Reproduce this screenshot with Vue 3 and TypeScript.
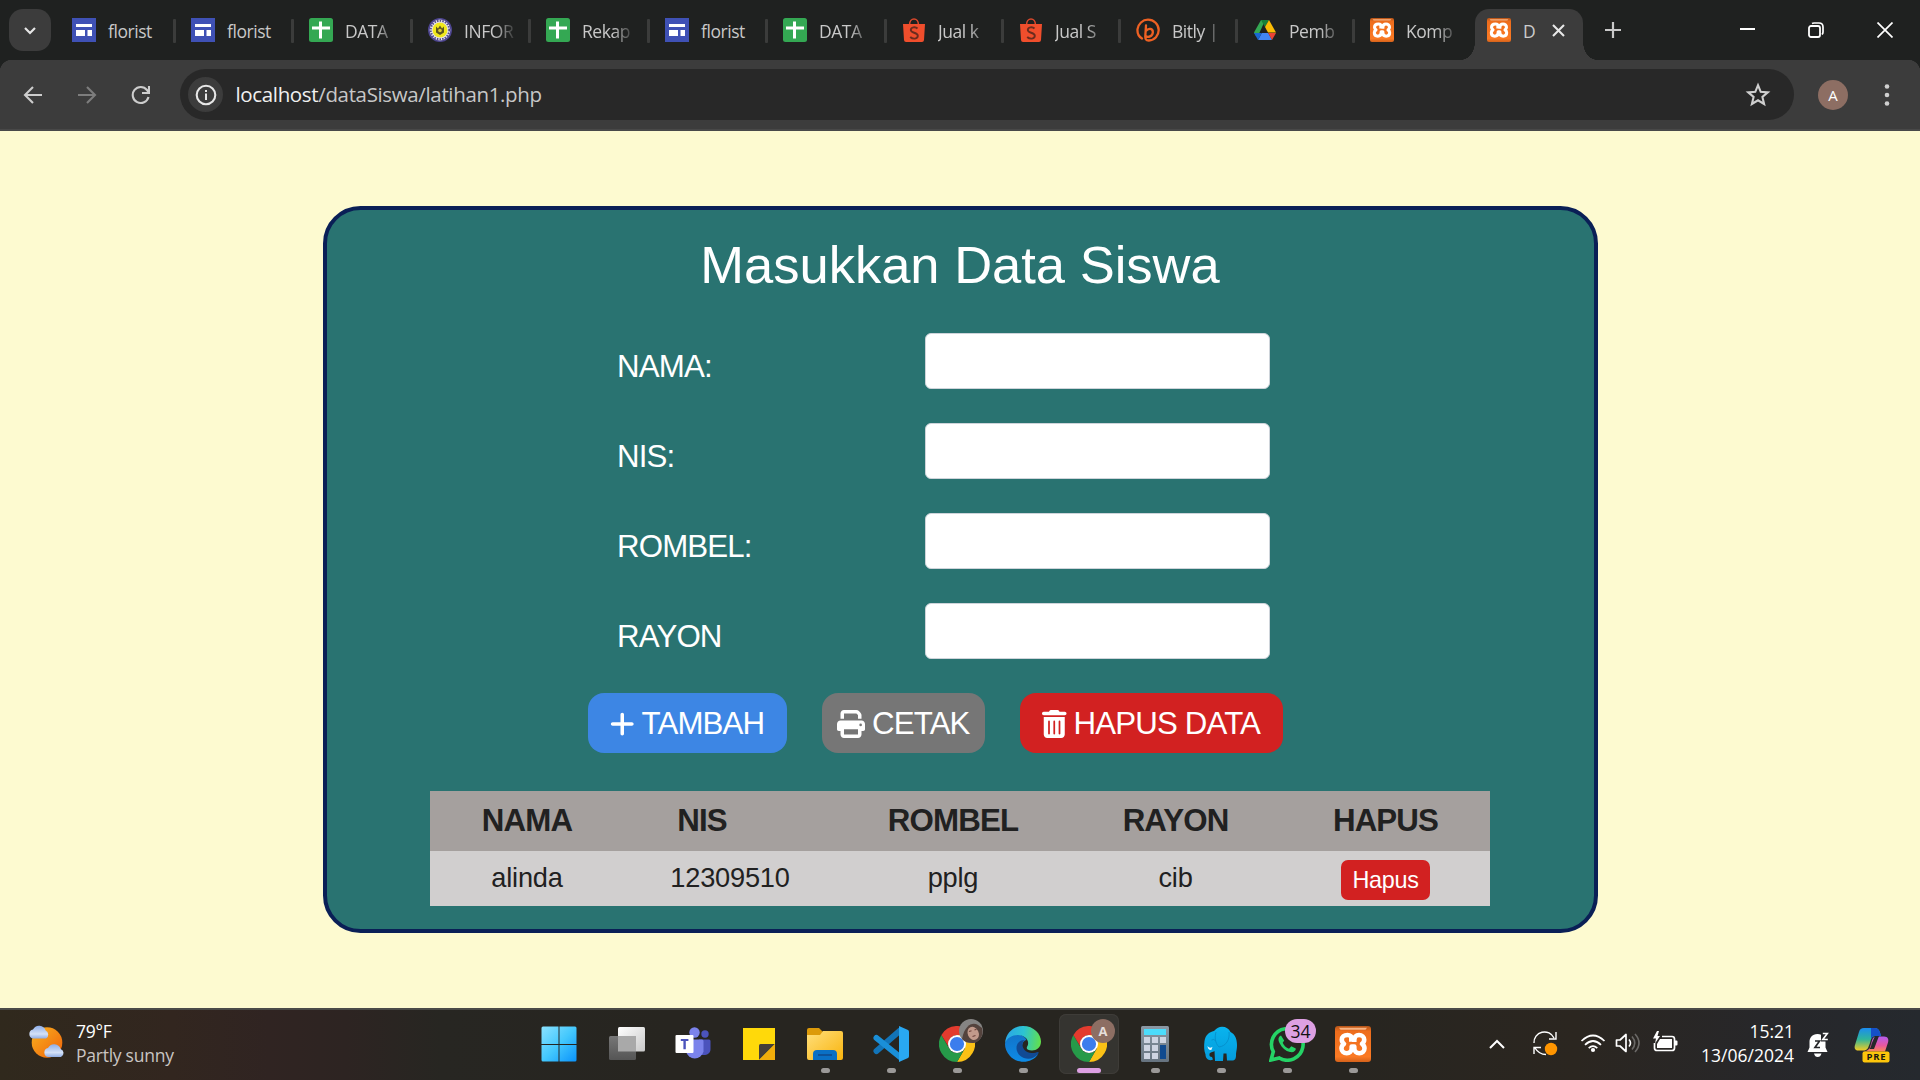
<script setup lang="ts">
import { reactive } from 'vue'

interface Tab {
  icon: string
  title: string
  width: number
  fade?: boolean
}

interface Student {
  nama: string
  nis: string
  rombel: string
  rayon: string
}

const tabs: Tab[] = [
  { icon: 'sites', title: 'florist', width: 119 },
  { icon: 'sites', title: 'florist', width: 118 },
  { icon: 'sheets', title: 'DATA', width: 119, fade: true },
  { icon: 'school', title: 'INFOR', width: 118, fade: true },
  { icon: 'sheets', title: 'Rekap', width: 119, fade: true },
  { icon: 'sites', title: 'florist', width: 118 },
  { icon: 'sheets', title: 'DATA', width: 119, fade: true },
  { icon: 'shopee', title: 'Jual k', width: 117, fade: true },
  { icon: 'shopee', title: 'Jual S', width: 117, fade: true },
  { icon: 'bitly', title: 'Bitly |', width: 117, fade: true },
  { icon: 'drive', title: 'Pemb', width: 117, fade: true },
  { icon: 'xampp', title: 'Komp', width: 105, fade: true },
]

const form = reactive({ nama: '', nis: '', rombel: '', rayon: '' })
const fields: { key: keyof typeof form; label: string }[] = [
  { key: 'nama', label: 'NAMA:' },
  { key: 'nis', label: 'NIS:' },
  { key: 'rombel', label: 'ROMBEL:' },
  { key: 'rayon', label: 'RAYON' },
]

const students: Student[] = [
  { nama: 'alinda', nis: '12309510', rombel: 'pplg', rayon: 'cib' },
]

const apps: { icon: string; running?: boolean; active?: boolean; badge?: string }[] = [
  { icon: 'windows' },
  { icon: 'taskview' },
  { icon: 'teams' },
  { icon: 'sticky' },
  { icon: 'explorer', running: true },
  { icon: 'vscode', running: true },
  { icon: 'chrome', running: true, badge: 'photo' },
  { icon: 'edge', running: true },
  { icon: 'chrome', active: true, badge: 'A' },
  { icon: 'calc', running: true },
  { icon: 'elephant', running: true },
  { icon: 'whatsapp', running: true, badge: '34' },
  { icon: 'xampp', running: true },
]
</script>

<template>
  <svg class="sprite" width="0" height="0" aria-hidden="true">
    <defs>
      <linearGradient id="gWin" x1="0" y1="0" x2="1" y2="1"><stop offset="0" stop-color="#8be2ff" /><stop offset=".5" stop-color="#44c8fd" /><stop offset="1" stop-color="#0a93fb" /></linearGradient>
      <linearGradient id="gTv" x1="0" y1="0" x2="1" y2="1"><stop offset="0" stop-color="#fff" /><stop offset="1" stop-color="#c9c9c9" /></linearGradient>
      <linearGradient id="gTv2" x1="0" y1="0" x2="0" y2="1"><stop offset="0" stop-color="#777" /><stop offset="1" stop-color="#555" /></linearGradient>
      <linearGradient id="gFold" x1="0" y1="0" x2="1" y2="1"><stop offset="0" stop-color="#ffdf7c" /><stop offset="1" stop-color="#f9b40d" /></linearGradient>
      <linearGradient id="gEdge1" x1="0" y1=".4" x2="1" y2=".5"><stop offset="0" stop-color="#2aa5e8" /><stop offset=".5" stop-color="#2cc3d2" /><stop offset="1" stop-color="#62e04c" /></linearGradient>
      <linearGradient id="gEdge2" x1="0" y1="0" x2="0" y2="1"><stop offset="0" stop-color="#1273c9" /><stop offset="1" stop-color="#0d8be6" /></linearGradient>
      <linearGradient id="gSun" x1="0" y1="0" x2="1" y2="1"><stop offset="0" stop-color="#f9b21f" /><stop offset="1" stop-color="#f0620a" /></linearGradient>
      <linearGradient id="gCloud" x1="0" y1="0" x2="0" y2="1"><stop offset="0" stop-color="#8eaee8" /><stop offset=".65" stop-color="#d4e1f8" /><stop offset="1" stop-color="#90aee6" /></linearGradient>
      <linearGradient id="gXa" x1="0" y1="0" x2="0" y2="1"><stop offset="0" stop-color="#b5551a" /><stop offset=".15" stop-color="#ee6d1c" /><stop offset=".85" stop-color="#fb7a24" /><stop offset="1" stop-color="#d4621b" /></linearGradient>
      <linearGradient id="gCoA" x1="0" y1="0" x2="0" y2="1"><stop offset="0" stop-color="#1b8cf0" /><stop offset=".5" stop-color="#2fb59b" /><stop offset="1" stop-color="#f3cc23" /></linearGradient>
      <linearGradient id="gCoB" x1="0" y1="0" x2="0" y2="1"><stop offset="0" stop-color="#b55cf0" /><stop offset=".6" stop-color="#e8589e" /><stop offset="1" stop-color="#fa8a55" /></linearGradient>
      <linearGradient id="gCalc" x1="0" y1="0" x2="0" y2="1"><stop offset="0" stop-color="#8b98a4" /><stop offset="1" stop-color="#66737f" /></linearGradient>
      <linearGradient id="gEl" x1="0" y1="0" x2="0" y2="1"><stop offset="0" stop-color="#09b4ee" /><stop offset="1" stop-color="#049bdc" /></linearGradient>
    </defs>

    <symbol id="i-sites" viewBox="0 0 24 24">
      <path fill="#3f51b5" d="M0 0h24v24H0z" /><path fill="#fff" d="M4 6h16v3H4zM4 12h9v6H4zM15.500 12H20v6h-4.500z" />
    </symbol>
    <symbol id="i-sheets" viewBox="0 0 24 24">
      <rect width="24" height="24" rx="2.500" fill="#34a853" /><path fill="#fff" d="M10 3.500h3v5h8v3h-8v9h-3v-9H3v-3h7z" />
    </symbol>
    <symbol id="i-school" viewBox="0 0 24 24">
      <circle cx="12" cy="12" r="11.200" fill="#e8e4ea" stroke="#4d4590" stroke-width="1.600" />
      <circle cx="12" cy="12" r="9.300" fill="none" stroke="#504a88" stroke-width="2" stroke-dasharray="1.500 1.200" />
      <circle cx="12" cy="12" r="7.500" fill="#f0e81c" />
      <path d="M8 8.500l2 2 2-3 2 3 2-2v6l-4 2.500-4-2.500z" fill="#5b5620" /><circle cx="12" cy="12.500" r="1.800" fill="#e0c930" />
    </symbol>
    <symbol id="i-shopee" viewBox="0 0 24 24">
      <path d="M7.500 7C7.500-1 16.500-1 16.500 7" fill="none" stroke="#d9482c" stroke-width="1.600" />
      <path fill="#f04e2c" d="M1 6h22l-1 16q-.2 2-2 2H4q-1.800 0-2-2z" />
      <path d="M15.500 10.500C13.500 8.500 8.800 9 8.800 12c0 3.200 7 2.300 7 5.800 0 3.400-5 3.600-7.600 1.200" fill="none" stroke="#6b2c1e" stroke-width="1.900" />
    </symbol>
    <symbol id="i-bitly" viewBox="0 0 24 24">
      <path d="M6 20.500C2.500 18.500 1.200 15 1.500 11.200 2.200 6 6.500 1.700 12 1.700c6 0 10.700 4.600 10.700 10.400 0 5.400-4 10-9.800 10.400-3 .1-3.800-1.800-3.600-4.600L10 7.500M9.800 13c3-3.600 7.400-2.400 7 1.600-.3 3.500-4.600 5.500-7.300 3.400" fill="none" stroke="#ee6123" stroke-width="2.300" stroke-linecap="round" />
    </symbol>
    <symbol id="i-drive" viewBox="0 0 24 24">
      <path fill="#34a853" d="M8 2h4l-1.800 4.500L5 18H3L1 14.500z" /><path fill="#188038" d="M8 2h8l-4 7z" />
      <path fill="#fbbc04" d="M16 2l7 12.500h-8L12 9z" /><path fill="#4285f4" d="M8.800 15h6.400l3.800 7H5z" />
      <path fill="#1967d2" d="M1 15h7.800L5 22z" /><path fill="#ea4335" d="M15.200 15H23l-4 7z" />
    </symbol>
    <symbol id="i-xampp" viewBox="0 0 36 36">
      <rect width="36" height="36" rx="3" fill="url(#gXa)" /><path d="M4 1.800h28l-1.500 2h-25z" fill="#f8b484" />
      <path d="M14 13.500h3.200c0-3-2-4.500-4.700-4.500C9 9 6.800 11 6.800 13.700c0 1.800.8 3.100 2.200 4.100-1.600 1.100-2.500 2.500-2.500 4.500 0 3 2.200 5 5.200 5s5-2 5-5v-1.800h2.600v1.800c0 3 2 5 5 5s5.200-2 5.200-5c0-2-.9-3.400-2.500-4.500 1.400-1 2.200-2.300 2.200-4.100C29.200 11 27 9 24 9c-3 0-4.700 1.900-4.700 4.700v2.300" fill="none" stroke="#fff" stroke-width="4.600" stroke-linejoin="round" />
    </symbol>

    <symbol id="i-windows" viewBox="0 0 36 36"><path fill="url(#gWin)" d="M2 .5h15.500v17.500H.5V2Q.5.500 2 .5zM18.500.5H34q1.500 0 1.500 1.500v16h-17zM.5 19h17v16.500H2Q.5 35.500.5 34zM18.500 19h17v15q0 1.500-1.500 1.500H18.500z" /></symbol>
    <symbol id="i-taskview" viewBox="0 0 36 36">
      <rect x="9" y="1" width="27" height="24.500" rx="1.500" fill="url(#gTv)" /><rect y="10" width="27" height="24" rx="1.500" fill="url(#gTv2)" /><path d="M9 10h18v15.500H9z" fill="#a9a9a9" />
    </symbol>
    <symbol id="i-teams" viewBox="0 0 36 36">
      <circle cx="30" cy="8" r="3.700" fill="#4b53bc" /><circle cx="19.500" cy="6.500" r="5.200" fill="#7b83eb" />
      <path d="M24 13.500h10q1.500 0 1.500 1.500v8c0 4-3 6-7 6h-3z" fill="#4b53bc" />
      <path d="M11 13.500h16q1.500 0 1.500 1.500v10.500a9 9 0 0 1-17.500 0z" fill="#7b83eb" />
      <rect x=".5" y="9" width="18" height="18" rx="1" fill="#fff" />
      <path d="M5.800 13h7.600v2h-2.600v8.300H8.400V15H5.800z" fill="#4b53bc" />
    </symbol>
    <symbol id="i-sticky" viewBox="0 0 36 36"><path fill="#ffd90a" d="M2 2h32v17L19 34H2z" /><path fill="#453f38" d="M18 19.500q0-1.500 1.500-1.500H34L18 34z" /><path fill="#f2ae0b" d="M34 18v16H18z" /></symbol>
    <symbol id="i-explorer" viewBox="0 0 36 36">
      <path fill="#dc9a0a" d="M0 4q0-2 2-2h10l4 4H34v10H0z" /><path fill="url(#gFold)" d="M0 9h13l3-4h18q2 0 2 2v25q0 2-2 2H2q-2 0-2-2z" />
      <path fill="#0a70c5" d="M6 34v-6q0-4 4-4h16q4 0 4 4v6z" /><path d="M11 29h14" stroke="#11488a" stroke-width="1.500" />
    </symbol>
    <symbol id="i-vscode" viewBox="0 0 36 36">
      <path d="M3.500 25L26.500 5" stroke="#1274b8" stroke-width="6" stroke-linecap="round" /><path d="M3.500 12L27 31" stroke="#1a8fd8" stroke-width="6" stroke-linecap="round" />
      <path d="M26 0l9 4q1 .6 1 2v24q0 1.400-1 2l-9 4z" fill="#29a8f2" />
    </symbol>
    <symbol id="i-chrome" viewBox="0 0 36 36">
      <path fill="#fbc116" d="M18 9h15.600A18 18 0 0 1 18 36l7.800-13.500z" /><path fill="#269a49" d="M2.400 9l7.800 13.500A9 9 0 0 0 25.800 22.500L18 36A18 18 0 0 1 2.400 9z" />
      <path fill="#e33b2e" d="M2.400 9A18 18 0 0 1 33.600 9H18a9 9 0 0 0-8 12.500z" />
      <circle cx="18" cy="18" r="9" fill="#fff" /><circle cx="18" cy="18" r="7.100" fill="#3b7ded" />
    </symbol>
    <symbol id="i-edge" viewBox="0 0 36 36">
      <path fill="url(#gEdge2)" d="M0 18C1 7 17 5 21.500 14c-6 1-7 14 3.500 16 4 .6 6-.6 8.300-2C27 38 12 38 5 30 1.500 26 0 22 0 18z" />
      <path fill="url(#gEdge1)" d="M0 17C1 6 9 0 18 0c11 0 18 8 18 15.500 0 6-4.500 9-9 9-4 0-6-1.500-5-3.500 4-7-3-12-9-12C7 9 2 12 0 17z" />
      <path fill="#114a94" d="M11.500 22c0-5 3.500-8 8-8-5 5 0 13 7 13 3 0 5-.6 6.500-1 1 0 .8 1 0 2-7 9-21.500 4-21.500-6z" />
    </symbol>
    <symbol id="i-calc" viewBox="0 0 36 36">
      <rect x="4" width="28" height="36" rx="1.500" fill="url(#gCalc)" /><path fill="#4cdcfb" d="M7 3h22v6H7z" />
      <path fill="#ced4e1" d="M7 11h6v6H7zM15 11h6v6h-6zM23 11h6v6h-6zM7 19h6v6H7zM15 19h6v6h-6zM7 27h6v6H7zM15 27h6v6h-6z" /><path fill="#104a8f" d="M23 19h6v14h-6z" />
    </symbol>
    <symbol id="i-elephant" viewBox="0 0 36 36">
      <path fill="url(#gEl)" d="M11 5C14 2 16 .8 19 .8c4 0 7 2 8.500 5.200C32 8 34 13 34 19c0 5-1 7-1 10 0 4-1 5.500-4 5.500h-5l-.5-7h-3l-.5 7.500h-8L11.500 25c-1.800 1.500-4.500 1-5 3-.4 2 .5 3 2.500 3l1 2.500c-4 2-7.500-1-7.500-5C1 25 .8 20 1.500 15 2.500 9 6 6 11 5z" />
      <path d="M13 6c-1.500 5-1 11 3 15 7.500-1 11-8 10-15M8.500 14q2.500-1.500 4 .8" fill="none" stroke="#068fcb" stroke-width=".9" /><path d="M4.500 20q2 3 5 .8l-1 3Q5 24.500 4.500 20z" fill="#eef9ff" />
    </symbol>
    <symbol id="i-whatsapp" viewBox="0 0 36 36">
      <path d="M2 34l2.300-8.300A15.800 15.800 0 1 1 10.300 32z" fill="none" stroke="#25d366" stroke-width="3.600" />
      <path d="M12 9.500c-3 1.300-3 4.500-1.500 7.500 2.500 5 6 8 10.500 9 3.500.7 6-1 5.800-3.500l-4.500-2.300-2.300 2.500c-3-1.200-5-3-6.300-6l1.500-2.200z" fill="#25d366" />
    </symbol>
  </svg>

  <div class="screen">
    <header class="strip">
      <button class="search-tabs"><svg width="12" height="9" viewBox="0 0 12 9"><path d="M1 2l5 5 5-5" fill="none" stroke="#e6e6e6" stroke-width="2.200" /></svg></button>
      <div class="tabs">
        <div v-for="(tab, i) in tabs" :key="i" class="tab" :class="{ last: i === tabs.length - 1 }" :style="{ width: tab.width + 'px' }">
          <svg class="favicon"><use :href="'#i-' + tab.icon" /></svg>
          <span class="tab-title" :class="{ fade: tab.fade }">{{ tab.title }}</span>
        </div>
        <div class="tab active">
          <svg class="favicon"><use href="#i-xampp" /></svg>
          <span class="tab-title">D</span>
          <svg class="close" width="13" height="13" viewBox="0 0 13 13"><path d="M1 1l11 11M12 1L1 12" stroke="#e8e8e8" stroke-width="2.100" /></svg>
        </div>
      </div>
      <svg class="new-tab" width="16" height="16" viewBox="0 0 16 16"><path d="M8 0v16M0 8h16" stroke="#c9c9c9" stroke-width="2.200" /></svg>
      <div class="controls">
        <svg width="16" height="16" viewBox="0 0 16 16"><path d="M1 7h15" stroke="#fff" stroke-width="2" /></svg>
        <svg width="16" height="16" viewBox="0 0 16 16"><rect x="1" y="4" width="11" height="11" rx="2" fill="none" stroke="#fff" stroke-width="1.800" /><path d="M4 1.500Q5 1 6 1h5q4 0 4 4v5q0 1.500-1 2.500" fill="none" stroke="#fff" stroke-width="1.700" /></svg>
        <svg width="16" height="16" viewBox="0 0 16 16"><path d="M.5.500l15 15M15.500.500l-15 15" stroke="#fff" stroke-width="1.700" /></svg>
      </div>
    </header>

    <nav class="toolbar">
      <svg class="nav" width="20" height="20" viewBox="0 0 20 20"><path d="M19 10H2.500M10 2l-8 8 8 8" fill="none" stroke="#cdcdcd" stroke-width="2.100" /></svg>
      <svg class="nav" width="20" height="20" viewBox="0 0 20 20"><path d="M1 10h16.500M10 2l8 8-8 8" fill="none" stroke="#7d7d7d" stroke-width="2.100" /></svg>
      <svg class="nav" width="20" height="20" viewBox="-1 0 20 20"><path d="M17.500 12A8 8 0 1 1 16 5l1.500 2" fill="none" stroke="#cdcdcd" stroke-width="2.100" /><path d="M18 1v7h-7" fill="none" stroke="#cdcdcd" stroke-width="2.100" /></svg>
      <div class="omnibox">
        <span class="info"><svg width="22" height="22" viewBox="0 0 22 22"><circle cx="11" cy="11" r="9.300" fill="none" stroke="#e6e6e6" stroke-width="2.100" /><path d="M11 9.500V16M11 6v2" stroke="#e6e6e6" stroke-width="2" /></svg></span>
        <span class="url"><b>localhost</b>/dataSiswa/latihan1.php</span>
        <svg class="star" width="26" height="26" viewBox="0 0 26 26"><path d="M13 3.200l2.700 6.600 7.100.6-5.400 4.600 1.700 7L13 18.300 6.900 22l1.700-7-5.400-4.600 7.100-.6z" fill="none" stroke="#cfcfcf" stroke-width="2.100" /></svg>
      </div>
      <span class="avatar">A</span>
      <svg class="dots" width="6" height="28" viewBox="0 0 6 28"><g fill="#d0d0d0"><circle cx="3" cy="5.500" r="2.300" /><circle cx="3" cy="14" r="2.300" /><circle cx="3" cy="22.500" r="2.300" /></g></svg>
    </nav>

    <main class="page">
      <section class="card">
        <h1>Masukkan Data Siswa</h1>
        <form class="form" @submit.prevent>
          <div v-for="f in fields" :key="f.key" class="row">
            <label :for="f.key">{{ f.label }}</label>
            <input :id="f.key" v-model="form[f.key]" type="text" autocomplete="off" />
          </div>
        </form>
        <div class="actions">
          <button class="btn add">
            <svg width="24.500" height="28" viewBox="0 0 448 512"><path fill="#fff" d="M256 80c0-17.700-14.300-32-32-32s-32 14.300-32 32V224H48c-17.700 0-32 14.300-32 32s14.300 32 32 32H192V432c0 17.700 14.300 32 32 32s32-14.300 32-32V288H400c17.700 0 32-14.300 32-32s-14.300-32-32-32H256V80z" /></svg>
            <span>TAMBAH</span>
          </button>
          <button class="btn print">
            <svg width="28" height="28" viewBox="0 0 512 512"><path fill="#fff" d="M128 0C92.700 0 64 28.700 64 64v96h64V64H354.700L384 93.300V160h64V93.300c0-17-6.700-33.300-18.700-45.300L400 18.700C388 6.700 371.700 0 354.700 0H128zM384 352v96H128V352H384zm64 32h32c17.700 0 32-14.300 32-32V256c0-35.300-28.700-64-64-64H64c-35.300 0-64 28.700-64 64v96c0 17.700 14.300 32 32 32H64v64c0 35.300 28.700 64 64 64H384c35.300 0 64-28.700 64-64V384zM432 248a24 24 0 1 1 0 48 24 24 0 1 1 0-48z" /></svg>
            <span>CETAK</span>
          </button>
          <button class="btn remove">
            <svg width="24.500" height="28" viewBox="0 0 448 512"><path fill="#fff" d="M135.200 17.700L128 32H32C14.300 32 0 46.300 0 64S14.300 96 32 96H416c17.700 0 32-14.300 32-32s-14.300-32-32-32H320l-7.200-14.300C307.400 6.800 296.300 0 284.200 0H163.800c-12.100 0-23.200 6.800-28.600 17.700zM416 128H32V448c0 35.300 28.700 64 64 64H352c35.300 0 64-28.700 64-64V128zM144 208V432c0 8.800-7.200 16-16 16s-16-7.200-16-16V208c0-8.800 7.200-16 16-16s16 7.200 16 16zm96 0V432c0 8.800-7.200 16-16 16s-16-7.200-16-16V208c0-8.800 7.200-16 16-16s16 7.200 16 16zm96 0V432c0 8.800-7.200 16-16 16s-16-7.200-16-16V208c0-8.800 7.200-16 16-16s16 7.200 16 16z" /></svg>
            <span>HAPUS DATA</span>
          </button>
        </div>
        <table>
          <colgroup><col class="c1" /><col class="c2" /><col class="c3" /><col class="c4" /><col class="c5" /></colgroup>
          <thead>
            <tr><th>NAMA</th><th class="nis">NIS</th><th>ROMBEL</th><th>RAYON</th><th>HAPUS</th></tr>
          </thead>
          <tbody>
            <tr v-for="s in students" :key="s.nis">
              <td>{{ s.nama }}</td><td>{{ s.nis }}</td><td>{{ s.rombel }}</td><td>{{ s.rayon }}</td>
              <td class="del-cell"><button class="del">Hapus</button></td>
            </tr>
          </tbody>
        </table>
      </section>
    </main>

    <footer class="taskbar">
      <div class="weather">
        <svg width="38" height="36" viewBox="0 0 38 36">
          <circle cx="19" cy="18.500" r="15.300" fill="url(#gSun)" />
          <path d="M5 14.500a4.600 4.600 0 0 1 0-9 6.800 6.800 0 0 1 12.600 1A4.500 4.500 0 0 1 18 14.500z" fill="url(#gCloud)" />
          <path d="M20 33a4.600 4.600 0 0 1 0-9 6.800 6.800 0 0 1 12.600 1A4.300 4.300 0 0 1 33 33z" fill="url(#gCloud)" />
        </svg>
        <div class="lines"><span>79°F</span><span class="dim">Partly sunny</span></div>
      </div>
      <div class="apps">
        <div v-for="(app, i) in apps" :key="i" class="app" :class="{ active: app.active }">
          <svg class="app-icon"><use :href="'#i-' + app.icon" /></svg>
          <svg v-if="app.badge === 'photo'" class="badge" width="24" height="24" viewBox="0 0 24 24">
            <circle cx="12" cy="12" r="12" fill="#858483" /><path d="M3 20C6 5 14 3 19 6l4 3c2 7-2 14-9 15-5 0-8-1-11-4z" fill="#54433d" /><ellipse cx="14" cy="14.500" rx="5.500" ry="6.800" transform="rotate(-25 14 14)" fill="#c29a8b" /><path d="M10 12.500l2.500-.8M15.500 11l2-.8M13.500 17.500l3-1" stroke="#70453e" stroke-width="1.200" />
          </svg>
          <span v-else-if="app.badge === 'A'" class="badge letter">A</span>
          <span v-else-if="app.badge" class="badge count">{{ app.badge }}</span>
          <i v-if="app.running || app.active" class="mark" />
        </div>
      </div>
      <div class="tray">
        <svg class="chev" width="16" height="10" viewBox="0 0 16 10"><path d="M1 9l7-7 7 7" fill="none" stroke="#fff" stroke-width="2" /></svg>
        <svg class="sync" width="26" height="26" viewBox="0 0 26 26"><path d="M2 13A10.500 10.500 0 0 1 22 8M24 2v7h-7M2 24v-6.500h7M3 18q4 6.500 11 6.500" fill="none" stroke="#fff" stroke-width="1.400" /><circle cx="19" cy="19" r="6.200" fill="#ff9500" /></svg>
        <svg class="wifi" width="26" height="20" viewBox="0 0 26 20"><path d="M1.500 8q11.500-11 23 0M5 11.800q8-7.600 16 0M8.700 15.200q4.300-4 8.600 0" fill="none" stroke="#fff" stroke-width="1.700" /><circle cx="13" cy="17" r="2.100" fill="#fff" /></svg>
        <svg class="vol" width="26" height="20" viewBox="0 0 26 20"><path d="M1.500 7H5l6-5.500v17L5 13H1.500z" fill="none" stroke="#fff" stroke-width="1.700" stroke-linejoin="round" /><path d="M14 6.500q3 3.500 0 7" fill="none" stroke="#fff" stroke-width="1.600" /><path d="M17 3.500q5.500 6.500 0 13M20 1q8 9 0 18" fill="none" stroke="#6b6967" stroke-width="1.600" /></svg>
        <svg class="bat" width="26" height="22" viewBox="0 0 26 22"><path d="M10 5.500h10q2.500 0 2.500 2.500v9q0 2.500-2.500 2.500H5q-2.500 0-2.500-2.500v-5" fill="none" stroke="#fff" stroke-width="1.700" /><path d="M8 8h12v9H5v-4z" fill="#fff" /><path d="M23 9.500h1.500q1 0 1 1v3q0 1-1 1H23zM5 0L1 7.500h3l-1 5L8 5H5.500L7 0z" fill="#fff" /></svg>
        <div class="clock"><span>15:21</span><span>13/06/2024</span></div>
        <svg class="bell" width="22" height="26" viewBox="0 0 22 26"><path d="M10.500 2C5 2 2.500 6 2.500 10v5.500L.5 20h20l-2-4.500V10c0-4-2.500-8-8-8zM7 21.500h7.500q-1 3.500-3.800 3.500T7 21.500z" fill="#fff" /><path d="M14 0h8v9.500h-8z" fill="#26272a" /><path d="M15.800 1.500h4.500l-4.500 6h5" fill="none" stroke="#fff" stroke-width="1.600" /><path d="M8 9h4.500L8 15.500h5" fill="none" stroke="#26272a" stroke-width="1.700" /></svg>
        <svg class="copilot" width="36" height="36" viewBox="0 0 36 36">
          <path d="M10 1h11c4 0 5 4 6 8h-6c-3 0-4 3-5 7l-2 5c-1 2-3 2.500-5 2.500H4C1 23.500 0 21 1 18L5 5c1-3 2-4 5-4z" fill="url(#gCoA)" /><path d="M17 1h4c4 0 5 4 6 8h-6q-3 0-4 3z" fill="#1550c8" />
          <path d="M22 9.500h8c4 0 5 3 4 6l-3 9H8c4 0 6-1 8-4l2-7c1-3 2-4 4-4z" fill="url(#gCoB)" /><path d="M21 9h4l-5 13h-5q2-1 2.500-5z" fill="#26282a" />
          <rect x="8.500" y="24.500" width="27" height="11" rx="2" fill="#fdc60b" /><text x="22" y="33.300" text-anchor="middle" textLength="19" class="pre">PRE</text>
        </svg>
      </div>
    </footer>
  </div>
</template>

<style>
body { margin: 0; overflow: hidden; }
</style>

<style scoped>
* { box-sizing: border-box; }
button { border: 0; padding: 0; font: inherit; color: inherit; }
svg { display: block; flex: none; }
.sprite { position: absolute; }
.screen { width: 1920px; height: 1080px; display: flex; flex-direction: column; overflow: hidden; font-family: "Open Sans", "Noto Sans", sans-serif; }

.strip { height: 60px; flex: none; display: flex; align-items: center; background: #1f2120; padding-left: 9px; }
.search-tabs { width: 42px; height: 42px; border-radius: 14px; background: #3c3c3c; display: grid; place-items: center; }
.tabs { display: flex; height: 60px; margin-left: 21px; }
.tab { display: flex; align-items: center; position: relative; height: 60px; }
.tab:not(.active):not(.last)::after { content: ""; position: absolute; right: 15px; top: 19px; width: 3px; height: 24px; background: #3b3c3b; border-radius: 1px; }
.favicon { width: 24px; height: 24px; }
.tab-title { margin-left: 12px; width: 50px; white-space: nowrap; font-size: 17.500px; line-height: 28px; letter-spacing: -0.450px; color: #c8c8c8; padding-top: 1px; }
.tab-title.fade { -webkit-mask-image: linear-gradient(90deg, #000 62%, rgba(0, 0, 0, 0.15)); mask-image: linear-gradient(90deg, #000 62%, rgba(0, 0, 0, 0.15)); }
.tab.active { width: 108px; height: 51px; align-self: flex-end; background: #3c3c3c; border-radius: 14px 14px 0 0; padding: 0 0 9px 12px; }
.tab.active .tab-title { width: 13px; color: #ccc; }
.tab.active::before, .tab.active::after { content: ""; position: absolute; bottom: 0; width: 14px; height: 18px; }
.tab.active::before { left: -14px; background: radial-gradient(ellipse 14px 18px at 0 0, transparent 98%, #3c3c3c); }
.tab.active::after { right: -14px; background: radial-gradient(ellipse 14px 18px at 100% 0, transparent 98%, #3c3c3c); }
.close { margin-left: 16px; }
.new-tab { margin-left: 22px; }
.controls { margin-left: auto; display: flex; gap: 53px; padding-right: 27px; }

.toolbar { height: 71px; flex: none; display: flex; align-items: center; border-bottom: 2px solid #484848; padding-left: 23px; background: radial-gradient(circle at 12px 12px, #3c3c3c 12px, #1f2120 12.500px) 0 0 / 12px 12px no-repeat, radial-gradient(circle at 0 12px, #3c3c3c 12px, #1f2120 12.500px) 100% 0 / 12px 12px no-repeat, #3c3c3c; }
.nav { margin-right: 33.500px; }
.omnibox { width: 1614px; height: 51px; border-radius: 26px; background: #282828; display: flex; align-items: center; padding: 0 23px 0 8px; margin-left: -3.500px; }
.info { width: 35px; height: 35px; border-radius: 50%; background: #3c3c3c; display: grid; place-items: center; }
.url { margin-left: 12.500px; font-size: 20.500px; line-height: 30px; padding-bottom: 2px; letter-spacing: -0.350px; color: #c7c7c7; }
.url b { font-weight: 400; color: #f0f0f0; }
.star { margin-left: auto; }
.avatar { width: 30px; height: 30px; border-radius: 50%; background: #8d6e63; color: #fff; font-size: 15px; line-height: 30px; text-align: center; margin-left: 24px; }
.dots { margin-left: 36px; }

.page { height: 877px; flex: none; background: #fdfad0; padding-top: 75px; font-family: "Liberation Sans", Arial, sans-serif; }
.card { width: 1275px; height: 727px; margin: 0 auto 0 323px; padding-right: 1px; border: 4px solid #0a1f56; border-radius: 37.500px; background: #297371; display: flex; flex-direction: column; align-items: center; }
h1 { margin: 24px 0 38px; font-size: 52.500px; line-height: 61px; height: 61px; font-weight: 400; color: #fff; }
.form { display: grid; gap: 34px; width: 653px; margin-left: -33px; }
.row { display: flex; align-items: center; justify-content: space-between; height: 56px; }
label { font-size: 31.250px; line-height: 46px; padding-top: 11px; letter-spacing: -0.850px; color: #fff; }
input { width: 345px; height: 56px; border: 1px solid #ced4da; border-radius: 6px; background: #fff; padding: 0 12px; font-size: 28px; }
.actions { display: flex; gap: 35px; margin: 34px 0 38px; width: 695px; margin-left: -49px; }
.btn { height: 60px; border-radius: 16px; display: flex; align-items: center; color: #fff; font-size: 31.250px; line-height: 60px; letter-spacing: -0.850px; white-space: nowrap; }
.add { width: 199px; background: #3d86e4; padding-left: 22px; }
.print { width: 163px; background: #767676; padding-left: 15px; }
.remove { width: 263px; background: #d22121; padding-left: 22px; }
.btn svg { margin-top: 2px; }
.btn span { margin-left: 7px; padding-top: 1px; }

table { width: 1060px; table-layout: fixed; border-collapse: collapse; color: #212121; text-align: center; }
.c1 { width: 194px; } .c2 { width: 212px; } .c3 { width: 234px; } .c4 { width: 211px; } .c5 { width: 209px; }
th { height: 60px; padding: 0; background: #a5a09e; font-size: 31.250px; line-height: 58px; letter-spacing: -0.850px; font-weight: 700; }
th.nis { padding-right: 56px; }
td { height: 55px; padding: 0 0 2px; background: #d1cfcf; font-size: 27.200px; line-height: 40px; letter-spacing: -0.200px; }
td.del-cell { padding: 4px 0 1px; }
.del { display: block; margin: 0 auto; width: 89px; height: 40px; border-radius: 7px; background: #d22121; color: #fff; font-size: 23.400px; letter-spacing: -0.300px; line-height: 40px; }

.taskbar { height: 72px; flex: none; border-top: 2px solid #4a4a47; background: linear-gradient(90deg, #30291d 0, #32261f 9%, #302422 14%, #2d2422 18%, #272622 23%, #272520 35%, #272520 70%, #2b2620 82%, #27272a 92%, #25292e 100%); display: flex; color: #fff; font-size: 17.500px; }
.weather { width: 528px; display: flex; padding: 14px 0 0 28px; gap: 10px; }
.weather .lines { margin-top: -5px; letter-spacing: -0.250px; }
.lines, .clock { display: flex; flex-direction: column; line-height: 24px; }
.dim { color: #c9c5c3; }
.apps { display: flex; }
.app { width: 60px; height: 60px; margin: 4px 3px 0; position: relative; border-radius: 7px; }
.app.active { background: #353430; box-shadow: inset 0 0 0 1px #3e3c38; }
.app-icon { width: 36px; height: 36px; margin: 12px; }
.app:first-child .app-icon { margin-left: 10px; }
.mark { position: absolute; left: 26px; bottom: 1px; width: 9px; height: 5px; border-radius: 3px; background: #9b9998; }
.active .mark { left: 18px; width: 24px; background: #dda0e3; }
.badge { position: absolute; left: 32px; top: 5px; }
.letter { width: 24px; height: 24px; border-radius: 50%; background: #8d6e63; color: #e6dedb; font-size: 13px; font-weight: 700; line-height: 24px; text-align: center; }
.count { left: 28px; width: 31px; height: 24px; border-radius: 12px; background: #dda0e3; color: #111; font-size: 17.500px; line-height: 24px; text-align: center; }
.tray { margin-left: auto; display: flex; align-items: flex-start; width: 431px; }
.chev { margin-top: 29px; }
.sync { margin: 20px 0 0 27px; }
.wifi { margin: 23px 0 0 22px; }
.vol { margin: 23px 0 0 9px; }
.bat { margin: 21px 0 0 11px; }
.clock { margin: 9px 0 0 13px; width: 103px; text-align: right; }
.bell { margin: 22px 0 0 12.500px; }
.copilot { margin: 17px 0 0 25.500px; }
.pre { font: 700 9.500px "Open Sans", sans-serif; fill: #1d1a10; }
</style>
